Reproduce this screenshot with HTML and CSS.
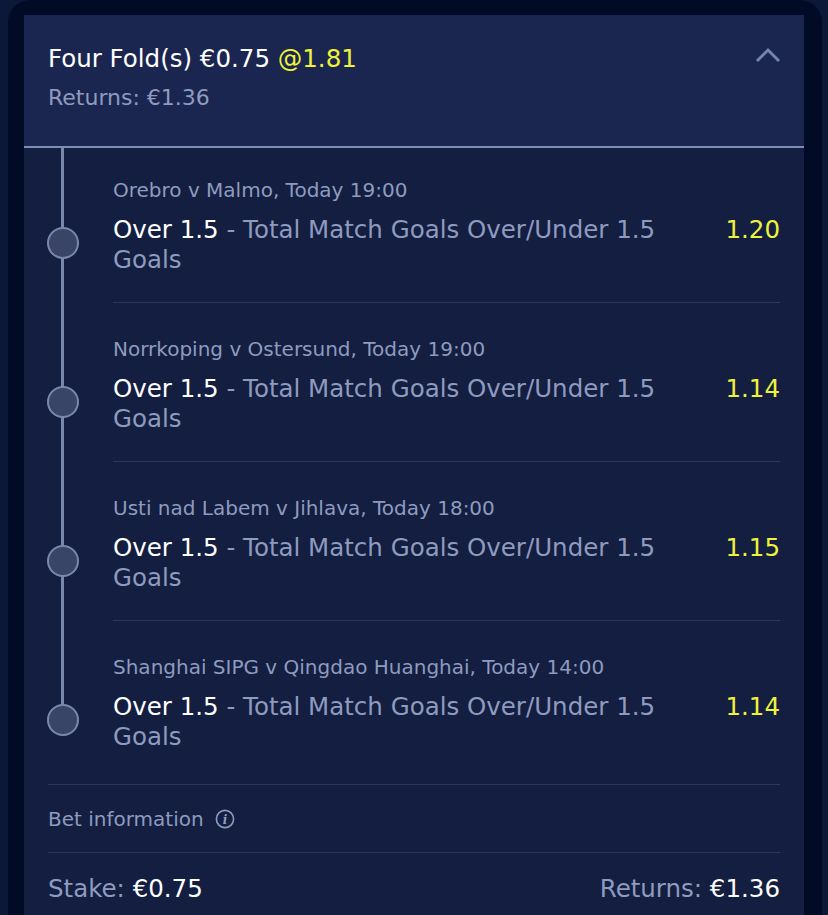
FILE: index.html
```html
<!DOCTYPE html>
<html>
<head>
<meta charset="utf-8">
<link rel="stylesheet" href="styles.css">
</head>
<body>
<div class="frame">
  <div class="card">
    <div class="card-head">
      <div class="head-text">
        <div class="title">Four Fold(s) €0.75 <span class="odds-at">@1.81</span></div>
        <div class="head-returns">Returns: €1.36</div>
      </div>
      <svg class="chevron" width="26" height="18" viewBox="0 0 26 18"><polyline points="2,15 13,4 24,15" fill="none" stroke="#7484ac" stroke-width="3"/></svg>
    </div>
    <div class="legs">
      <div class="leg">
        <div class="rail"><span class="dot"></span></div>
        <div class="leg-body">
          <div class="event">Orebro v Malmo, Today 19:00</div>
          <div class="sel-row">
            <div class="sel"><span class="sel-name">Over 1.5</span> - Total Match Goals Over/Under 1.5 Goals</div>
            <div class="price">1.20</div>
          </div>
        </div>
      </div>
      <div class="leg">
        <div class="rail"><span class="dot"></span></div>
        <div class="leg-body">
          <div class="event">Norrkoping v Ostersund, Today 19:00</div>
          <div class="sel-row">
            <div class="sel"><span class="sel-name">Over 1.5</span> - Total Match Goals Over/Under 1.5 Goals</div>
            <div class="price">1.14</div>
          </div>
        </div>
      </div>
      <div class="leg">
        <div class="rail"><span class="dot"></span></div>
        <div class="leg-body">
          <div class="event">Usti nad Labem v Jihlava, Today 18:00</div>
          <div class="sel-row">
            <div class="sel"><span class="sel-name">Over 1.5</span> - Total Match Goals Over/Under 1.5 Goals</div>
            <div class="price">1.15</div>
          </div>
        </div>
      </div>
      <div class="leg last">
        <div class="rail"><span class="dot"></span></div>
        <div class="leg-body">
          <div class="event">Shanghai SIPG v Qingdao Huanghai, Today 14:00</div>
          <div class="sel-row">
            <div class="sel"><span class="sel-name">Over 1.5</span> - Total Match Goals Over/Under 1.5 Goals</div>
            <div class="price">1.14</div>
          </div>
        </div>
      </div>
    </div>
    <div class="bet-info">
      <span>Bet information</span>
      <svg class="info-icon" width="20" height="20" viewBox="0 0 20 20"><circle cx="10" cy="10" r="8.6" fill="none" stroke="#8e9bbf" stroke-width="1.6"/><text x="10" y="15" text-anchor="middle" font-family="DejaVu Serif, serif" font-style="italic" font-weight="bold" font-size="12" fill="#8e9bbf">i</text></svg>
    </div>
    <div class="totals">
      <div><span class="lbl">Stake:</span> <span class="val">€0.75</span></div>
      <div><span class="lbl">Returns:</span> <span class="val">€1.36</span></div>
    </div>
  </div>
</div>
</body>
</html>
```
FILE: styles.css
```css
* { box-sizing: border-box; }
html, body { margin: 0; padding: 0; }
body {
  background: #0b1837;
  font-family: "DejaVu Sans", Verdana, sans-serif;
  height: 915px;
  overflow: hidden;
}
.frame {
  margin: 0 6px 0 8px;
  background: #020b26;
  border-radius: 22px 22px 0 0;
  padding: 15px 18px 0 16px;
  height: 915px;
}
.card {
  background: #131e41;
  height: 900px;
}
.card-head {
  background: #1b2650;
  border-bottom: 2px solid #7d8cb4;
  height: 133px;
  padding: 29px 24px 0 24px;
  display: flex;
  justify-content: space-between;
  align-items: flex-start;
}
.title {
  font-size: 24.5px;
  line-height: 30px;
  color: #ffffff;
}
.odds-at { color: #eef23c; }
.head-returns {
  font-size: 22px;
  line-height: 26px;
  margin-top: 11px;
  color: #8e9bbf;
}
.chevron { margin-top: 2px; margin-right: -1px; }
.leg {
  position: relative;
  display: flex;
  padding: 34px 24px 0 0;
}
.leg:first-child { padding-top: 30px; }
.rail {
  position: relative;
  width: 89px;
  flex: none;
}
.rail::before {
  content: "";
  position: absolute;
  left: 37px;
  width: 3px;
  top: -34px;
  bottom: 0;
  background: #7a88b0;
}
.leg:first-child .rail::before { top: -30px; }
.leg.last .rail::before { bottom: auto; height: 100px; }
.dot {
  position: absolute;
  left: 23px;
  top: 49px;
  width: 32px;
  height: 32px;
  border-radius: 50%;
  background: #3a4467;
  border: 2px solid #7a88b0;
}
.leg-body {
  flex: 1;
  border-bottom: 1px solid #2b3659;
  padding-bottom: 27px;
}
.leg.last .leg-body { border-bottom: none; padding-bottom: 32px; }
.event {
  font-size: 20px;
  line-height: 24px;
  color: #8e9bbf;
}
.sel-row {
  display: flex;
  justify-content: space-between;
  margin-top: 13px;
}
.sel {
  font-size: 24.5px;
  line-height: 30px;
  color: #8e9bbf;
  width: 580px;
}
.sel-name { color: #ffffff; }
.price {
  font-size: 24.5px;
  line-height: 30px;
  color: #eef23c;
}
.bet-info {
  margin: 0 24px;
  border-top: 1px solid #2b3659;
  border-bottom: 1px solid #2b3659;
  padding: 22px 0 21px;
  display: flex;
  align-items: center;
  gap: 11px;
  font-size: 20px;
  line-height: 24px;
  color: #8e9bbf;
}
.info-icon { display: block; }
.totals {
  margin: 0 24px;
  padding-top: 21px;
  display: flex;
  justify-content: space-between;
  font-size: 24.5px;
  line-height: 30px;
}
.lbl { color: #8e9bbf; }
.val { color: #ffffff; }
```
